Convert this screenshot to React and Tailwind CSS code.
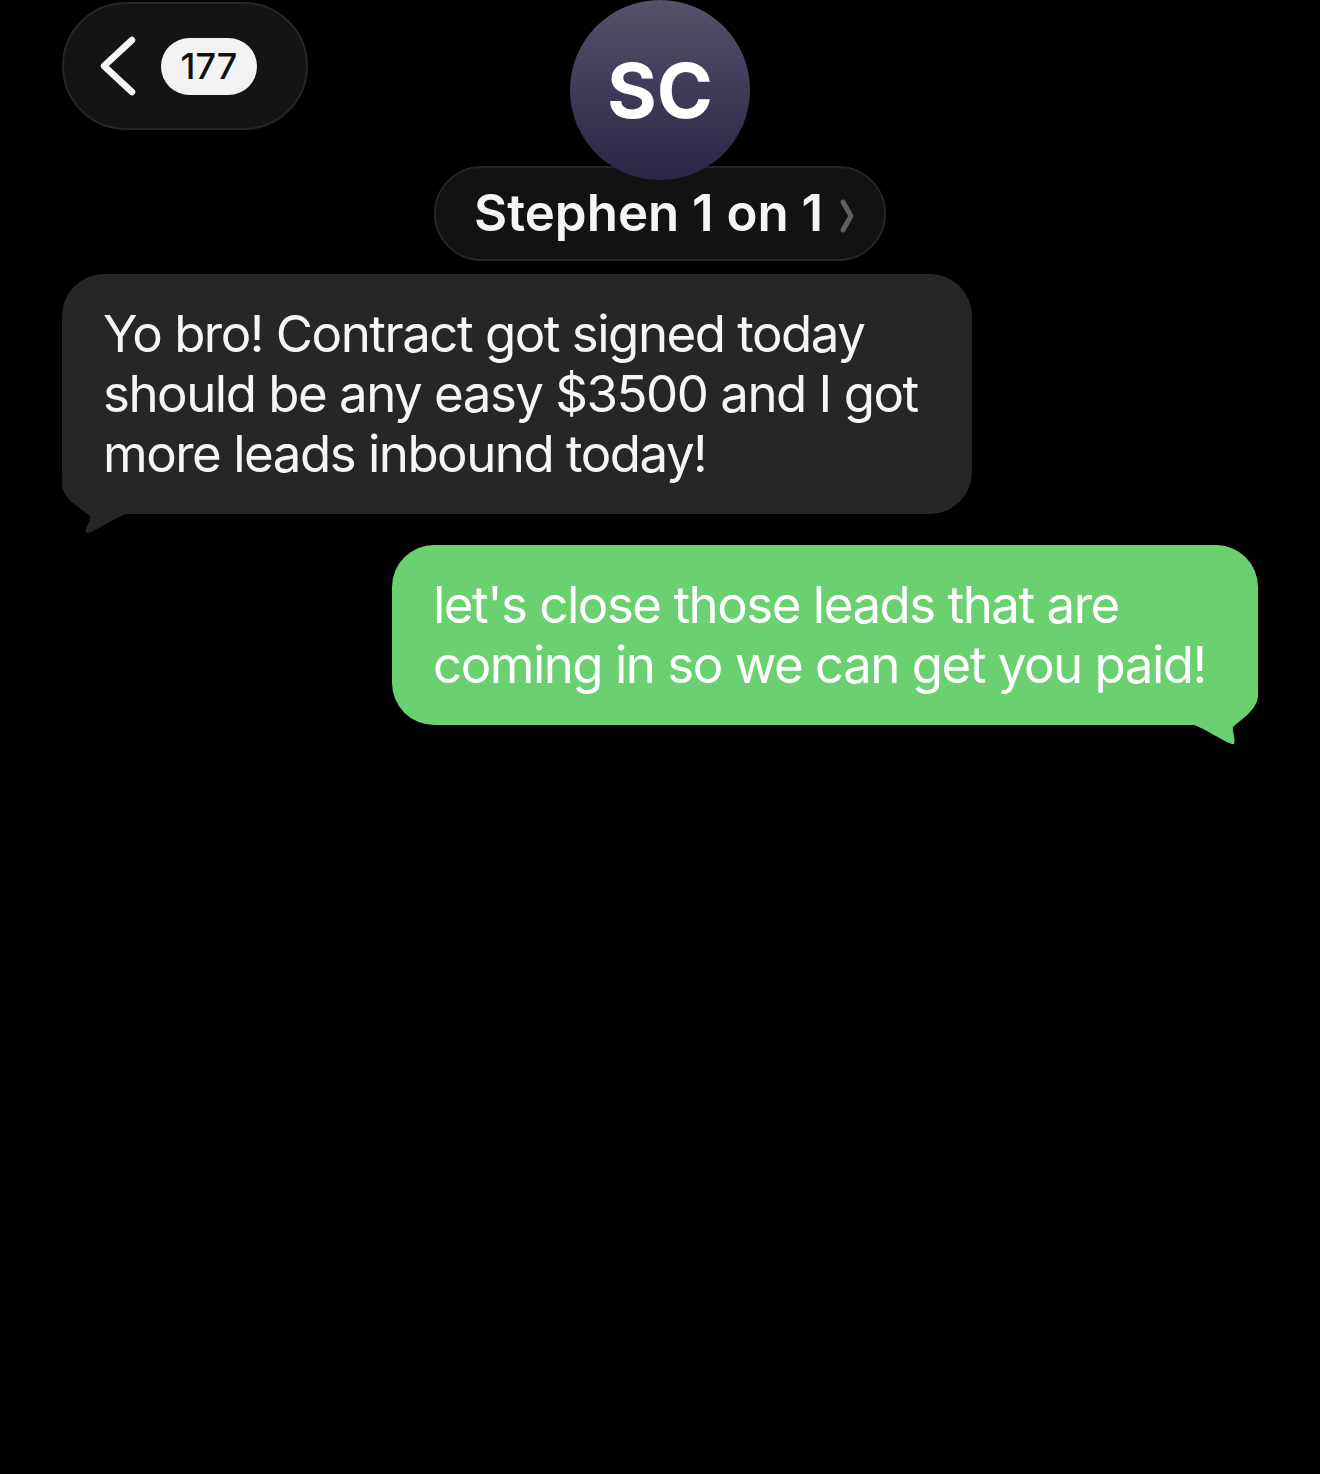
import React from "react";

const font = { fontFamily: "Inter, 'Liberation Sans', sans-serif" };

function BackPill() {
  return (
    <div className="ml-[62px] mt-[2px] flex h-[128px] w-[246px] items-center rounded-full border-2 border-[#262626] bg-[#141414] pl-[35px]">
      <svg width="38" height="60" viewBox="0 0 38 60" className="mr-[24px]">
        <path d="M33 4 L5 30 L33 56" fill="none" stroke="#f5f5f5" strokeWidth="6.5" strokeLinecap="round" strokeLinejoin="round" />
      </svg>
      <div className="flex h-[57px] w-[96px] items-center justify-center rounded-full bg-[#f2f2f2] text-[36px] font-medium text-[#111]">
        177
      </div>
    </div>
  );
}

function Contact() {
  return (
    <div className="flex flex-col items-center">
      <div className="relative z-10 flex h-[180px] w-[180px] items-center justify-center rounded-full bg-gradient-to-b from-[#57516b] to-[#2b2546]">
        <span className="text-[76px] font-bold text-white">SC</span>
      </div>
      <div className="-mt-[14px] flex h-[95px] w-[452px] items-center rounded-full border-2 border-[#262626] bg-[#121212] pl-[38px]">
        <span className="text-[51px] font-semibold text-[#f5f5f5]">Stephen 1 on 1</span>
        <svg width="16" height="36" viewBox="0 0 16 36" className="ml-[16px] mt-[4px]">
          <path d="M4 4 L12 18 L4 32" fill="none" stroke="#5f5f5f" strokeWidth="5" strokeLinecap="round" strokeLinejoin="round" />
        </svg>
      </div>
    </div>
  );
}

function Incoming({ lines }) {
  return (
    <div className="relative ml-[62px] w-[910px]">
      <svg width="80" height="60" viewBox="0 0 80 60" className="absolute left-0 top-[200px]">
        <path d="M0 0 L0 10 C0 25 20 35 28 42 C30 46 22 55 24 59 C30 60 50 45 64 40 L70 0 Z" fill="#262629" />
      </svg>
      <div className="relative rounded-[42px] bg-[#262629] py-[30px] pl-[41px] pr-[40px] text-[51px] leading-[60px] tracking-[-1.5px] text-[#f5f5f5]">
        {lines.map((l) => (
          <div key={l}>{l}</div>
        ))}
      </div>
    </div>
  );
}

function Outgoing({ lines }) {
  return (
    <div className="relative ml-auto mr-[62px] w-[866px]">
      <svg width="80" height="60" viewBox="0 0 80 60" className="absolute right-0 top-[140px]">
        <path d="M80 0 L80 10 C80 25 62 35 55 42 C54 46 58 55 56 59 C50 60 30 45 16 40 L10 0 Z" fill="#6bd06f" />
      </svg>
      <div className="relative rounded-[42px] bg-[#6bd06f] py-[30px] pl-[41px] pr-[40px] text-[51px] leading-[60px] tracking-[-1.5px] text-white">
        {lines.map((l) => (
          <div key={l}>{l}</div>
        ))}
      </div>
    </div>
  );
}

export default function App() {
  return (
    <div className="min-h-[1474px] w-full bg-black" style={font}>
      <div className="grid grid-cols-[1fr_auto_1fr]">
        <div>
          <BackPill />
        </div>
        <Contact />
        <div />
      </div>

      <div className="mt-[13px]">
        <Incoming
          lines={[
            "Yo bro! Contract got signed today",
            "should be any easy $3500 and I got",
            "more leads inbound today!",
          ]}
        />
      </div>

      <div className="mt-[31px]">
        <Outgoing
          lines={[
            "let's close those leads that are",
            "coming in so we can get you paid!",
          ]}
        />
      </div>
    </div>
  );
}
